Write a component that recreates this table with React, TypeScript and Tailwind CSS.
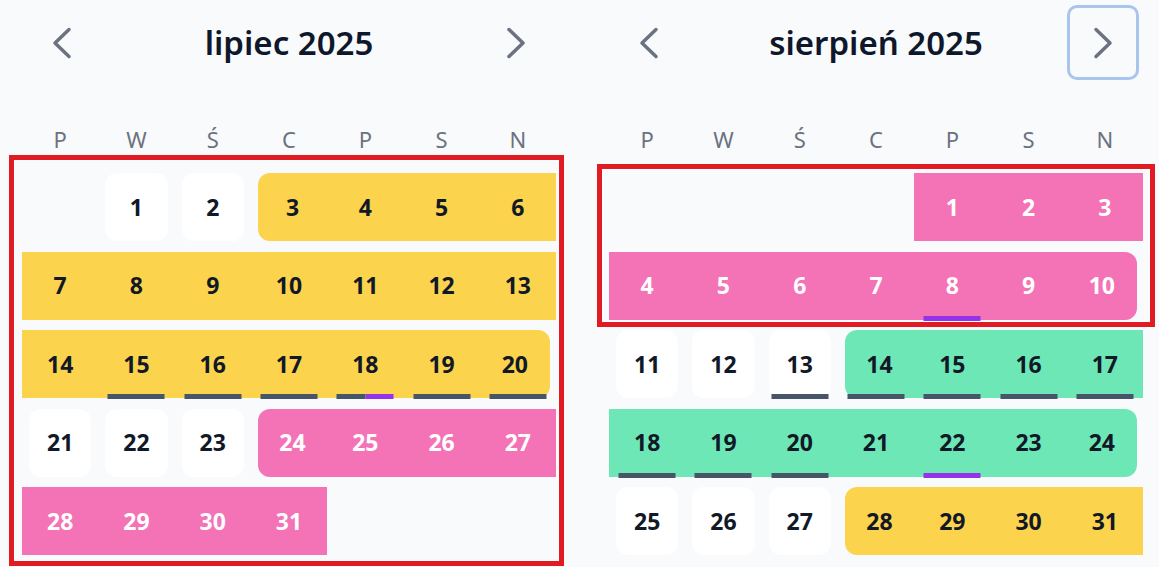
import React from "react"

type Bar = "slate" | "purple" | "split"
type Cell = {
  day?: number
  color?: "yellow" | "pink" | "green"
  start?: boolean
  end?: boolean
  bar?: Bar
}

const weekdays = ["P", "W", "Ś", "C", "P", "S", "N"]

const fills = {
  yellow: "bg-[#fcd34d] text-[#111827]",
  pink: "bg-[#f472b6] text-white",
  green: "bg-[#6ee7b7] text-[#111827]",
}

function buildMonth(
  offset: number,
  ranges: { from: number; to: number; color: "yellow" | "pink" | "green"; openStart?: boolean; openEnd?: boolean }[],
  bars: Record<number, Bar>
): Cell[] {
  const cells: Cell[] = []
  for (let i = 0; i < offset; i++) cells.push({})
  for (let d = 1; d <= 31; d++) {
    const r = ranges.find(x => d >= x.from && d <= x.to)
    cells.push({
      day: d,
      color: r?.color,
      start: r ? d === r.from && !r.openStart : false,
      end: r ? d === r.to && !r.openEnd : false,
      bar: bars[d],
    })
  }
  return cells
}

const july = buildMonth(
  1,
  [
    { from: 3, to: 20, color: "yellow" },
    { from: 24, to: 31, color: "pink", openEnd: true },
  ],
  { 15: "slate", 16: "slate", 17: "slate", 18: "split", 19: "slate", 20: "slate" }
)

const august = buildMonth(
  4,
  [
    { from: 1, to: 10, color: "pink", openStart: true },
    { from: 14, to: 24, color: "green" },
    { from: 28, to: 31, color: "yellow", openEnd: true },
  ],
  { 8: "purple", 13: "slate", 14: "slate", 15: "slate", 16: "slate", 17: "slate", 18: "slate", 19: "slate", 20: "slate", 22: "purple" }
)

function Chevron({ dir }: { dir: "left" | "right" }) {
  return (
    <svg width="20" height="32" viewBox="0 0 20 32" fill="none">
      <polyline
        points={dir === "left" ? "17,2.5 3,16 17,29.5" : "3,2.5 17,16 3,29.5"}
        stroke="#6b7280"
        strokeWidth="3.5"
        strokeLinecap="round"
        strokeLinejoin="round"
      />
    </svg>
  )
}

function DayBar({ bar }: { bar: Bar }) {
  if (bar === "split") {
    return (
      <div className="absolute bottom-[-1px] left-1/2 -translate-x-1/2 w-[57px] h-[5px] flex">
        <div className="flex-1 bg-[#475569]" />
        <div className="flex-1 bg-[#9333ea]" />
      </div>
    )
  }
  return (
    <div
      className={
        "absolute bottom-[-1px] left-1/2 -translate-x-1/2 w-[57px] h-[5px] " +
        (bar === "purple" ? "bg-[#9333ea]" : "bg-[#475569]")
      }
    />
  )
}

function DayCell({ cell }: { cell: Cell }) {
  if (!cell.day) return <div className="h-[68px]" />
  let cls = "h-full flex items-center justify-center "
  if (cell.color) {
    cls += fills[cell.color]
    if (cell.start) cls += " ml-[7px] rounded-l-[12px]"
    if (cell.end) cls += " mr-[6px] rounded-r-[12px]"
  } else {
    cls += "bg-white text-[#111827] mx-[7px] rounded-[12px]"
  }
  return (
    <div className="h-[68px] relative">
      <div className={cls}>
        <span className="text-[23px] font-bold leading-none">{cell.day}</span>
      </div>
      {cell.bar && <DayBar bar={cell.bar} />}
    </div>
  )
}

function MonthView({ title, cells, focusNext }: { title: string; cells: Cell[]; focusNext?: boolean }) {
  return (
    <div className="w-[534px] shrink-0">
      <div className="mt-[5px] h-[75px] px-[4px] flex items-center justify-between">
        <button className="w-[72px] h-[75px] flex items-center justify-center rounded-[10px] border-[3px] border-transparent">
          <Chevron dir="left" />
        </button>
        <h2 className="text-[33px] font-semibold text-[#0f172a] leading-none">{title}</h2>
        <button
          className={
            "w-[72px] h-[75px] flex items-center justify-center rounded-[10px] border-[3px] " +
            (focusNext ? "border-[#a9c5ee]" : "border-transparent")
          }
        >
          <Chevron dir="right" />
        </button>
      </div>

      <div className="mt-[39px] h-[40px] grid grid-cols-7 items-center text-center text-[22px] text-[#6b7280]">
        {weekdays.map((w, i) => (
          <span key={i}>{w}</span>
        ))}
      </div>

      <div className="mt-[14px] grid grid-cols-7 gap-y-[10.5px]">
        {cells.map((c, i) => (
          <DayCell key={i} cell={c} />
        ))}
      </div>
    </div>
  )
}

export default function App() {
  return (
    <div
      className="relative w-[1159px] h-[567px] overflow-hidden bg-[#f8fafc]"
      style={{ fontFamily: '"Noto Sans", "Open Sans", sans-serif' }}
    >
      <div className="flex px-[22px] gap-[53px]">
        <MonthView title="lipiec 2025" cells={july} />
        <MonthView title="sierpień 2025" cells={august} focusNext />
      </div>

      {/* highlight boxes */}
      <div className="absolute left-[9px] top-[155px] w-[555px] h-[411px] border-[5px] border-[#e11b22] shadow-[inset_0_0_0_1px_white] pointer-events-none" />
      <div className="absolute left-[597px] top-[164px] w-[558px] h-[163px] border-[5px] border-[#e11b22] shadow-[inset_0_0_0_1px_white] pointer-events-none" />
    </div>
  )
}
